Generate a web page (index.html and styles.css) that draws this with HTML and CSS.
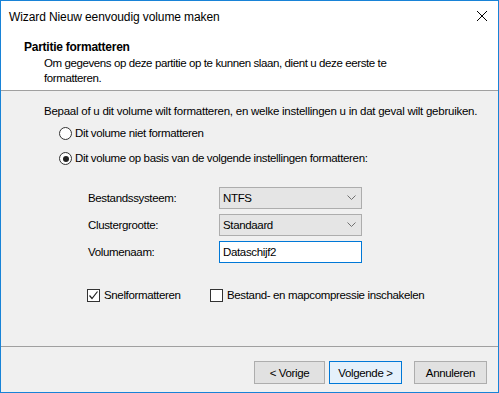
FILE: index.html
```html
<!DOCTYPE html>
<html lang="nl">
<head>
    <meta charset="UTF-8">
    <title>Wizard Nieuw eenvoudig volume maken</title>
    <link rel="stylesheet" href="styles.css">
</head>
<body>
    <div class="window">
        <!-- Title bar -->
        <div class="titlebar">
            <span class="title">Wizard Nieuw eenvoudig volume maken</span>
            <svg class="close" width="12" height="12" viewBox="0 0 12 12">
                <path d="M1 1 L11 11 M11 1 L1 11" stroke="#000" stroke-width="1" fill="none"/>
            </svg>
        </div>

        <!-- Wizard page header -->
        <div class="header">
            <div class="header-title">Partitie formatteren</div>
            <div class="header-sub">Om gegevens op deze partitie op te kunnen slaan, dient u deze eerste te<br>formatteren.</div>
        </div>

        <!-- Page body -->
        <div class="content">
            <p class="intro">Bepaal of u dit volume wilt formatteren, en welke instellingen u in dat geval wilt gebruiken.</p>

            <div class="radio-row">
                <span class="radio"></span>
                <span>Dit volume niet formatteren</span>
            </div>
            <div class="radio-row">
                <span class="radio checked"></span>
                <span>Dit volume op basis van de volgende instellingen formatteren:</span>
            </div>

            <div class="form-grid">
                <span class="label">Bestandssysteem:</span>
                <div class="combo">
                    <span>NTFS</span>
                    <svg width="9" height="6" viewBox="0 0 9 6"><path d="M0.5 0.5 L4.5 4.5 L8.5 0.5" stroke="#707070" fill="none"/></svg>
                </div>
                <span class="label">Clustergrootte:</span>
                <div class="combo">
                    <span>Standaard</span>
                    <svg width="9" height="6" viewBox="0 0 9 6"><path d="M0.5 0.5 L4.5 4.5 L8.5 0.5" stroke="#707070" fill="none"/></svg>
                </div>
                <span class="label">Volumenaam:</span>
                <div class="textbox">Dataschijf2</div>
            </div>

            <div class="check-row">
                <div class="check-item quick">
                    <span class="checkbox">
                        <svg width="11" height="11" viewBox="0 0 11 11"><path d="M1.5 5.5 L4 8.5 L9.5 1.5" stroke="#222" stroke-width="1.2" fill="none"/></svg>
                    </span>
                    <span>Snelformatteren</span>
                </div>
                <div class="check-item">
                    <span class="checkbox"></span>
                    <span>Bestand- en mapcompressie inschakelen</span>
                </div>
            </div>
        </div>

        <!-- Wizard buttons -->
        <div class="footer">
            <button class="btn back">&lt; Vorige</button>
            <button class="btn default">Volgende &gt;</button>
            <button class="btn cancel">Annuleren</button>
        </div>
    </div>
</body>
</html>
```

FILE: styles.css
```css
:root {
    --accent: #1883d7;
    --face: #f0f0f0;
    --line: #a0a0a0;
    --btn-face: #e1e1e1;
    --btn-border: #adadad;
}

body {
    margin: 0;
    font-family: 'Liberation Sans', Arial, sans-serif;
    font-size: 11.5px;
    letter-spacing: -0.35px;
    color: #000;
}

.window {
    width: 499px;
    height: 393px;
    box-sizing: border-box;
    border: 1px solid var(--accent);
    display: flex;
    flex-direction: column;
    background: var(--face);
}

.titlebar {
    height: 30px;
    background: #fff;
    display: flex;
    align-items: center;
    justify-content: space-between;
    padding: 0 10px 0 8px;
}

.title {
    font-size: 12px;
    letter-spacing: -0.1px;
    padding-top: 1px;
}

/* Header */
.header {
    background: #fff;
    padding: 9px 0 4px 23px;
    border-bottom: 1px solid var(--line);
    line-height: 15px;
}

.header-title {
    font-weight: 700;
    font-size: 12px;
    letter-spacing: -0.25px;
}

.header-sub {
    margin: 1px 0 0 20px;
    letter-spacing: -0.4px;
}

/* Body */
.content {
    flex: 1;
    padding: 13px 0 0 43px;
    line-height: 15px;
}

.intro {
    margin: 0 0 7px 0;
    white-space: nowrap;
    letter-spacing: -0.25px;
}

.radio-row {
    display: flex;
    align-items: center;
    gap: 3px;
    margin-left: 15px;
    margin-bottom: 10px;
}

.radio {
    width: 11px;
    height: 11px;
    border: 1px solid #333;
    border-radius: 50%;
    background: #fff;
    position: relative;
}

.radio.checked::after {
    content: "";
    position: absolute;
    left: 2.5px;
    top: 2.5px;
    width: 6px;
    height: 6px;
    border-radius: 50%;
    background: #222;
}

.form-grid {
    display: grid;
    grid-template-columns: 131px 143px;
    grid-auto-rows: 22px;
    row-gap: 5px;
    align-items: center;
    margin: 21px 0 0 44px;
}

.combo {
    height: 22px;
    box-sizing: border-box;
    border: 1px solid var(--btn-border);
    background: #e5e5e5;
    display: flex;
    align-items: center;
    justify-content: space-between;
    padding: 0 5px 0 3px;
}

.textbox {
    height: 22px;
    box-sizing: border-box;
    border: 1px solid #0078d7;
    background: #fff;
    padding: 3px 3px;
}

.check-row {
    display: flex;
    margin: 25px 0 0 43px;
}

.check-item {
    display: flex;
    align-items: center;
    gap: 4px;
}

.check-item.quick {
    width: 123px;
}

.checkbox {
    width: 11px;
    height: 11px;
    border: 1px solid #333;
    background: #fff;
    display: flex;
    align-items: center;
    justify-content: center;
}

/* Footer with buttons */
.footer {
    height: 46px;
    box-sizing: border-box;
    border-top: 1px solid var(--line);
    display: flex;
    justify-content: flex-end;
    align-items: flex-start;
    padding: 14px 11px 0 0;
}

.btn {
    width: 73px;
    height: 23px;
    border: 1px solid var(--btn-border);
    background: var(--btn-face);
    font-family: inherit;
    font-size: 11.5px;
    letter-spacing: -0.35px;
    color: #000;
    padding: 0;
}

.btn.back {
    width: 71px;
    margin-right: 4px;
}

.btn.default {
    background: #e5f1fb;
    border-color: #0078d7;
    margin-right: 12px;
}
```
